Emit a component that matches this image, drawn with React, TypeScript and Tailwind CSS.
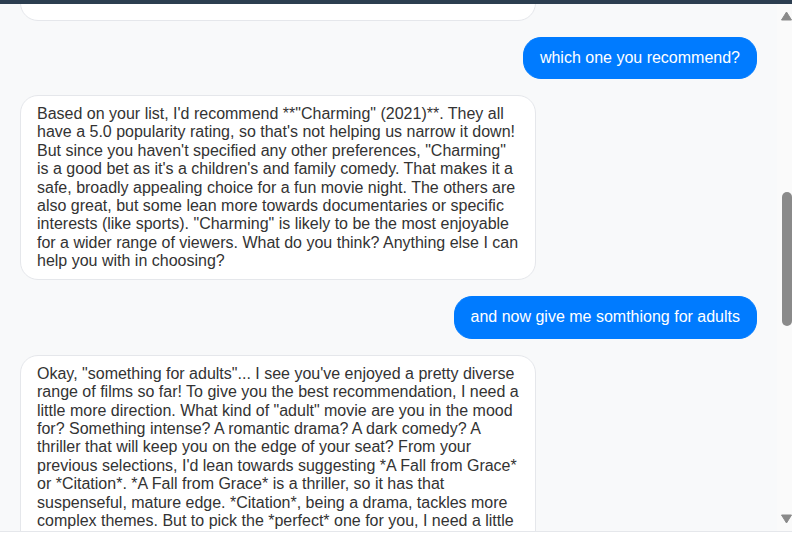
import { useLayoutEffect, useRef, useState } from "react";

type Message = {
  id: number;
  role: "user" | "assistant";
  text: string;
};

const messages: Message[] = [
  {
    id: 1,
    role: "assistant",
    text: "Hi! I'm your movie assistant. Tell me what you've watched lately and I'll help you find something great to see next.",
  },
  {
    id: 2,
    role: "user",
    text: "what movies have i watched?",
  },
  {
    id: 3,
    role: "assistant",
    text: "Here's what I have from your history so far: you've watched a real mix! There are a couple of thrillers like *A Fall from Grace*, a drama with *Citation*, a family comedy with *Charming*, and a few documentaries and sports films. It looks like you enjoy stories with a strong emotional hook, but you also like something light every now and then. Want me to narrow it down by genre, year or rating?",
  },
  {
    id: 4,
    role: "user",
    text: "show me the ones with popularity 5",
  },
  {
    id: 5,
    role: "assistant",
    text: 'Sure! Here are the movies from your list that have a popularity rating of 5.0:\n\n1. **"Charming" (2021)** - Animation, Family, Comedy\n2. **"The Last Dance" (2020)** - Documentary, Sports\n3. **"Mucho Mucho Amor" (2020)** - Documentary\n4. **"Becoming" (2020)** - Documentary, Biography\n5. **"The Speed Cubers" (2020)** - Documentary, Short\n6. **"Athlete A" (2020)** - Documentary, Sports\n7. **"Miss Americana" (2020)** - Documentary, Music\n8. **"Spelling the Dream" (2020)** - Documentary, Family\n\nThey all share the same 5.0 score, so any of them could be a good pick depending on your mood and who you are watching with tonight. Let me know if you want more details about any of them, like the cast, the runtime or where to stream them!\n\n',
  },
  {
    id: 6,
    role: "user",
    text: "which one you recommend?",
  },
  {
    id: 7,
    role: "assistant",
    text: 'Based on your list, I\'d recommend **"Charming" (2021)**. They all have a 5.0 popularity rating, so that\'s not helping us narrow it down! But since you haven\'t specified any other preferences, "Charming" is a good bet as it\'s a children\'s and family comedy. That makes it a safe, broadly appealing choice for a fun movie night. The others are also great, but some lean more towards documentaries or specific interests (like sports). "Charming" is likely to be the most enjoyable for a wider range of viewers. What do you think? Anything else I can help you with in choosing?',
  },
  {
    id: 8,
    role: "user",
    text: "and now give me somthiong for adults",
  },
  {
    id: 9,
    role: "assistant",
    text: 'Okay, "something for adults"... I see you\'ve enjoyed a pretty diverse range of films so far! To give you the best recommendation, I need a little more direction. What kind of "adult" movie are you in the mood for? Something intense? A romantic drama? A dark comedy? A thriller that will keep you on the edge of your seat? From your previous selections, I\'d lean towards suggesting *A Fall from Grace* or *Citation*. *A Fall from Grace* is a thriller, so it has that suspenseful, mature edge. *Citation*, being a drama, tackles more complex themes. But to pick the *perfect* one for you, I need a little more information. Tell me a bit about the mood you\'re in tonight, and whether you\'d prefer something recent or a classic, and I\'ll find the right fit!',
  },
  {
    id: 10,
    role: "user",
    text: "something intense, a thriller",
  },
  {
    id: 11,
    role: "assistant",
    text: "Great choice! In that case I'd go with *A Fall from Grace*. It's a tense courtroom thriller about a woman accused of murdering her husband, and a young public defender who starts to suspect there's far more to the story. It keeps you guessing right until the end, and the performances are strong. If you enjoy it, I can also suggest a few similar thrillers that match your taste. Would you like that?",
  },
  {
    id: 12,
    role: "user",
    text: "yes please",
  },
  {
    id: 13,
    role: "assistant",
    text: "Here are a few thrillers you might like next: *Gone Girl* (2014), a twisty mystery about a marriage gone very wrong; *Prisoners* (2013), a dark and gripping story about a father searching for his daughter; and *Nightcrawler* (2014), an unsettling look at the world of crime journalism. All three are intense, adult and very well reviewed. If you'd rather stay closer to the courtroom setting, *Primal Fear* (1996) and *The Lincoln Lawyer* (2011) are also excellent picks with clever twists and strong lead performances. Let me know which one sounds best and I can tell you more!",
  },
  {
    id: 14,
    role: "user",
    text: "thanks, i'll watch gone girl",
  },
  {
    id: 15,
    role: "assistant",
    text: "Excellent pick! *Gone Girl* is a gripping ride with plenty of twists, so grab some snacks and settle in. It runs for about two and a half hours, so it's best saved for a night when you're not in a hurry. Enjoy the movie, and come back any time you need another recommendation!",
  },
];

const ChatBubble = ({ message }: { message: Message }) => {
  const isUser = message.role === "user";
  return (
    <div className={`flex ${isUser ? "justify-end" : "justify-start"}`}>
      <div
        className={`max-w-[70%] rounded-[18px] border px-4 whitespace-pre-line ${
          isUser
            ? "bg-[#007bff] border-[#007bff] text-white py-[11px]"
            : "bg-white border-[#e5e7eb] text-[#333] py-[9px]"
        }`}
      >
        {message.text}
      </div>
    </div>
  );
};

const TRACK_TOP = 17;
const TRACK_BOTTOM = 17;

const App = () => {
  const listRef = useRef<HTMLDivElement>(null);
  const anchorRef = useRef<HTMLDivElement>(null);
  const [thumb, setThumb] = useState({ top: 0, height: 0 });

  const updateThumb = () => {
    const list = listRef.current;
    if (!list) return;
    const track = list.clientHeight - TRACK_TOP - TRACK_BOTTOM;
    setThumb({
      top: (list.scrollTop / list.scrollHeight) * track,
      height: (list.clientHeight / list.scrollHeight) * track,
    });
  };

  useLayoutEffect(() => {
    const list = listRef.current;
    const anchor = anchorRef.current;
    if (!list || !anchor) return;
    const offset =
      anchor.getBoundingClientRect().top -
      list.getBoundingClientRect().top +
      list.scrollTop;
    list.scrollTop = offset - 33;
    updateThumb();
  }, []);

  return (
    <div
      className="h-screen flex flex-col overflow-hidden bg-[#f8f9fa] text-base leading-[1.15]"
      style={{ fontFamily: '"Liberation Sans", Arial, sans-serif' }}
    >
      <div className="h-1 shrink-0 bg-[#2c3e50]" />

      <div className="h-[527px] shrink-0 flex">
        <div
          ref={listRef}
          onScroll={updateThumb}
          className="flex-1 overflow-y-auto [scrollbar-width:none] px-5 py-5 flex flex-col gap-4"
        >
          {messages.map((message) => (
            <div key={message.id} ref={message.id === 6 ? anchorRef : undefined}>
              <ChatBubble message={message} />
            </div>
          ))}
        </div>

        {/* scrollbar */}
        <div className="w-[15px] shrink-0 flex flex-col bg-[#fafafa]">
          <div className="h-[17px] flex items-end pl-1">
            <svg width="11" height="10" viewBox="0 0 11 10">
              <path d="M5.5 1 L10.5 9 L0.5 9 Z" fill="#8a8a8a" stroke="#8a8a8a" strokeLinejoin="round" />
            </svg>
          </div>
          <div className="flex-1 pl-[5px]">
            <div
              className="w-[10px] rounded-full bg-[#8a8a8a]"
              style={{ marginTop: thumb.top, height: thumb.height }}
            />
          </div>
          <div className="h-[17px] flex items-start pl-1">
            <svg width="11" height="10" viewBox="0 0 11 10">
              <path d="M0.5 1 L10.5 1 L5.5 9 Z" fill="#8a8a8a" stroke="#8a8a8a" strokeLinejoin="round" />
            </svg>
          </div>
        </div>
      </div>

      <form className="shrink-0 border-t border-[#e5e7eb] bg-white px-5 py-5 flex gap-3">
        <input
          type="text"
          placeholder="Type your message..."
          className="flex-1 rounded-full border border-[#ced4da] px-4 py-2 outline-none"
        />
        <button
          type="button"
          className="rounded-full bg-[#007bff] px-5 py-2 text-white"
        >
          Send
        </button>
      </form>
    </div>
  );
};

export default App;
